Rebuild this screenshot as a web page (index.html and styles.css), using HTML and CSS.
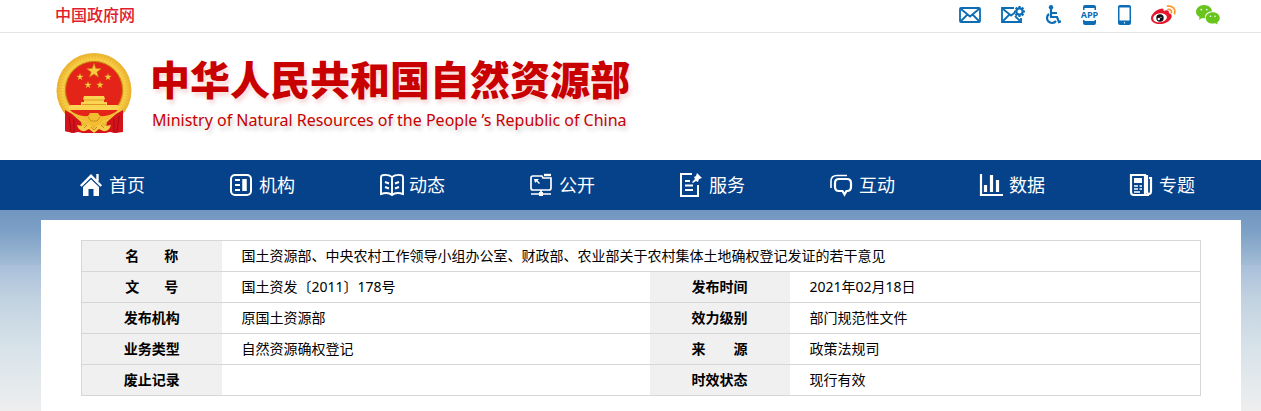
FILE: index.html
```html
<!DOCTYPE html>
<html lang="zh-CN">
<head>
<meta charset="utf-8">
<title>中华人民共和国自然资源部</title>
<link rel="stylesheet" href="styles.css">
</head>
<body>
<div class="topbar">
  <div class="wrap topbar-inner">
    <a class="gov" href="#">中国政府网</a>
    <div class="tools">
      <a href="#" aria-label="邮箱"><svg width="22" height="16" viewBox="0 0 22 16" fill="none" stroke="#0c6cb4" stroke-width="1.8"><rect x="1" y="1" width="20" height="14" rx="1"/><path d="M2 2l9 7.500L20 2M2 14l6-6M20 14l-6-6"/></svg></a>
      <a href="#" aria-label="邮箱设置"><svg width="24" height="18" viewBox="0 0 24 18" fill="none" stroke="#0c6cb4" stroke-width="1.8"><path d="M13 2H1v14h19v-4"/><path d="M2 3l8 6.500 4-3M2 15l6-6M19 15l-5-5"/><circle cx="18.500" cy="5.500" r="3.200" stroke-width="2.200"/><path d="M18.500 0v2M18.500 9v2M13 5.500h2M22 5.500h2M14.600 1.600l1.400 1.400M21 8l1.400 1.400M22.400 1.600L21 3M16 8l-1.400 1.400" stroke-width="2.200"/></svg></a>
      <a href="#" aria-label="无障碍"><svg width="16" height="20" viewBox="0 0 16 20" fill="none" stroke="#0c6cb4" stroke-width="2.200"><circle cx="6" cy="2.200" r="2.200" fill="#0c6cb4" stroke="none"/><path d="M6 4v8h6l2 5 2-.8M6 8h6"/><path d="M4 9a5 5 0 1 0 7 7"/></svg></a>
      <a href="#" aria-label="APP"><svg width="17" height="20" viewBox="0 0 17 20"><path d="M2 5V2q0-2 2-2h9q2 0 2 2v3h-1.500V3h-10v2zM2 15v3q0 2 2 2h9q2 0 2-2v-3h-1.500v1h-10v-1z" fill="#0c6cb4"/><text class="app" x="8.500" y="13" text-anchor="middle">APP</text></svg></a>
      <a href="#" aria-label="手机"><svg width="13" height="20" viewBox="0 0 13 20"><rect width="13" height="20" rx="2" fill="#0c6cb4"/><path d="M1.500 2.500h10v13h-10z" fill="#fff"/><circle cx="6.500" cy="17.700" r=".7" fill="#fff"/></svg></a>
      <a href="#" aria-label="微博"><svg width="25" height="20" viewBox="0 0 25 20"><path d="M9 4c2-1 4-1 3.600 2 3-1.300 6-1 5.200 2 3 1 3.700 3.200 2.200 5.500C18 17 13.500 19 9 19c-5 0-9-2-9-6C0 9.500 5 5 9 4z" fill="#e6162d"/><ellipse cx="9" cy="12.800" rx="7" ry="4.500" fill="#fff" transform="rotate(-8 9 12.800)"/><circle cx="9" cy="13" r="3.700" fill="#111"/><circle cx="7.800" cy="14" r="1.200" fill="#fff"/><circle cx="10" cy="12.300" r=".6" fill="#fff"/><path d="M16.500 1.200c5-1 8.500 3 7 7.500M17 4.500c2.500-.5 4 1 3.300 3.300" fill="none" stroke="#ff9933" stroke-width="1.700" stroke-linecap="round"/></svg></a>
      <a href="#" aria-label="微信"><svg width="24" height="20" viewBox="0 0 24 20" fill="#68c51d"><path d="M8 0c4.500 0 8 3 8 6.300-4.200 0-7.500 3-7 6.900-1 .1-2 0-3-.3L3 15l.5-3C1.200 10.800 0 9 0 6.800 0 3 3.600 0 8 0z"/><path d="M16.800 7.300c4 0 7 2.500 7 5.700 0 1.800-1 3.300-2.600 4.400l.5 2-2.400-1.200c-5 1.400-9.600-1.300-9.600-5.200 0-3.200 3-5.700 7.100-5.700z"/><g fill="#fff"><circle cx="5.300" cy="4.600" r=".9"/><circle cx="10.700" cy="4.600" r=".9"/><circle cx="14.500" cy="11.300" r=".8"/><circle cx="19" cy="11.300" r=".8"/></g></svg></a>
    </div>
  </div>
</div>

<header class="wrap masthead">
  <svg class="emblem" width="76" height="81" viewBox="0 0 76 81" aria-hidden="true">
    <defs><radialGradient id="gold" cx=".5" cy=".5" r=".5"><stop offset=".72" stop-color="#d99a1c"/><stop offset=".82" stop-color="#fbd24a"/><stop offset="1" stop-color="#eab02c"/></radialGradient>
    <path id="star" d="M0-1L.235-.324.951-.309.380.124.588.809 0 .4-.588.809-.380.124-.951-.309-.235-.324z"/></defs>
    <path d="M10 58h56l1 21-8 1-5-1-5 1H27l-5-1-5 1-8-2z" fill="#d5131b"/>
    <circle cx="38" cy="37.500" r="37.500" fill="url(#gold)"/>
    <circle cx="38" cy="37.500" r="33" fill="none" stroke="#d79b20" stroke-width="6" stroke-dasharray="1 2" opacity=".25"/>
    <circle cx="38" cy="37" r="28.500" fill="#e42319" stroke="#c6820f"/>
    <g fill="#f9cd3f" stroke="#c98912" stroke-width=".08"><use href="#star" transform="translate(38 18) scale(7.500)"/><use href="#star" transform="translate(24 24) scale(3.600)"/><use href="#star" transform="translate(52 24) scale(3.600)"/><use href="#star" transform="translate(32 32) scale(3.600)"/><use href="#star" transform="translate(44 32) scale(3.600)"/></g>
    <path d="M28 43h20l1 3-1 1v2h3v3h10l3 1-2 5H14l-2-5 3-1h10v-3h3v-2l-1-1z" fill="#fbd452"/>
    <path d="M28 47h20M26 51.500h24" stroke="#d78a16" stroke-width=".8"/>
    <path d="M14 57h48l-8 8H22z" fill="#e42319"/>
    <path d="M9 57l7 4 9 8 2 11-4-2-6 2-8-2zM67 57l-7 4-9 8-2 11 4-2 6 2 8-2z" fill="#d5131b"/>
    <path d="M13 63l2 16M18 66v13M63 63l-2 16M58 66v13" stroke="#a50a12"/>
    <path d="M15 58q8 6 17 5l2-3h8l2 3q9 1 17-5-5 8-14 10l-5 5-4-1-4 1-5-5q-9-2-14-10z" fill="#f4bd31"/>
    <path d="M21 72q7 2 11-1l6 4 6-4q4 3 11 1-2 7-8 6l-4-2-5 4-5-4-4 2q-6 1-8-6z" fill="#f7cb45"/>
    <path d="M32 64l3 4h6l3-4M31 72l-3 3M45 72l3 3M35 74l3 3 3-3" stroke="#c98a1c" fill="none"/>
  </svg>
  <div class="names">
    <h1>中华人民共和国自然资源部</h1>
    <p>Ministry of Natural Resources of the People ’s Republic of China</p>
  </div>
</header>

<nav class="nav">
  <div class="wrap nav-inner">
    <a href="#"><svg viewBox="0 0 22 22" fill="#fff"><path d="M11 5l8 7.500V22h-5.500v-7h-5v7H3v-9.500z"/><path d="M.8 12L11 1.800 21.200 12M17.500 0v7" fill="none" stroke="#fff" stroke-width="2.400"/><path d="M2.500 13L11 4.700l8.500 8.300" fill="none" stroke="#06428a" stroke-width=".9"/></svg>首页</a>
    <a href="#"><svg viewBox="0 0 22 22" fill="none" stroke="#fff" stroke-width="2"><rect x="1" y="1" width="20" height="20" rx="4"/><path d="M5 6h5M5 11h5M5 16h5"/><path d="M14.500 5v12" stroke-width="4.500"/></svg>机构</a>
    <a href="#"><svg class="wide" viewBox="0 0 24 22" fill="none" stroke="#fff" stroke-width="1.900"><path d="M12 3Q8 0 2.500 1.200 1 1.500 1 3v17Q8 17.500 12 21q4-3.500 11-1V3q0-1.500-1.500-1.800Q16 0 12 3zv18"/><path d="M5 8l4 1.500M5 13l4 1.500M15 9.500L19 8M15 14.500l4-1.500"/></svg>动态</a>
    <a href="#"><svg viewBox="0 0 22 22" fill="none" stroke="#fff" stroke-width="1.700"><path d="M12 2H3Q1 2 1 4v10q0 2 2 2h16q2 0 2-2V4h-8zM11 16v3M1 20h20"/><path d="M14 1h7" stroke-width="2.400"/><path d="M9 18h4v4H9zM4 5h5L7.500 6.500 10 9l-1 1-2.500-2.500L5 9z" fill="#fff" stroke="none"/></svg>公开</a>
    <a href="#"><svg viewBox="0 0 22 22" fill="none" stroke="#fff" stroke-width="2"><path d="M12 0H1v22h17V11M5 7h5M5 11.500h8M5 16h8"/><path d="M17-1l5 5-3 1-1 3-2-1-3 2-1-1 3-3-1-2 2-1z" fill="#fff" stroke="none"/></svg>服务</a>
    <a href="#"><svg viewBox="0 0 22 22" fill="none" stroke="#fff" stroke-width="2.200"><path d="M9 5h8q4 0 4 4v4q0 4-4 4h-.5l-2 3.500-2-3.500H9q-4 0-4-4V9q0-4 4-4z"/><path d="M1 14V7q0-5.500 6-5.500h10" stroke-width="1.600"/></svg>互动</a>
    <a href="#"><svg viewBox="0 0 22 22" fill="none" stroke="#fff"><path d="M1 0v21h22" stroke-width="2.200"/><path d="M5.500 11v7M11.500 1v17M17.500 6v12" stroke-width="3.200"/></svg>数据</a>
    <a href="#"><svg viewBox="0 0 22 22" fill="none" stroke="#fff" stroke-width="2.200"><path d="M1 1h14v20H4q-3 0-3-3zM15 2h2v15q0 3 2 3 2 0 2-3V4h-2M15 21h4"/><path d="M4 4h8v5H4z" fill="#fff" stroke="none"/><path d="M4 12h4M4 15h4M9.500 12H12M9.500 15H12M4 18h6" stroke-width="1.400"/></svg>专题</a>
  </div>
</nav>

<main class="stage">
  <div class="panel">
    <table class="meta">
      <colgroup><col class="label"><col><col class="label"><col class="last"></colgroup>
      <tr><th scope="row">名&emsp;&nbsp;&nbsp;&nbsp;称</th><td colspan="3">国土资源部、中央农村工作领导小组办公室、财政部、农业部关于农村集体土地确权登记发证的若干意见</td></tr>
      <tr><th scope="row">文&emsp;&nbsp;&nbsp;&nbsp;号</th><td>国土资发〔2011〕178号</td><th scope="row">发布时间</th><td>2021年02月18日</td></tr>
      <tr><th scope="row">发布机构</th><td>原国土资源部</td><th scope="row">效力级别</th><td>部门规范性文件</td></tr>
      <tr><th scope="row">业务类型</th><td>自然资源确权登记</td><th scope="row">来　　源</th><td>政策法规司</td></tr>
      <tr><th scope="row">废止记录</th><td></td><th scope="row">时效状态</th><td>现行有效</td></tr>
    </table>
  </div>
</main>
</body>
</html>
```
FILE: styles.css
```css
* { box-sizing: border-box; }
html, body { min-height: 100%; }
body {
  margin: 0;
  background: #fff;
  color: #000;
  font: 14px/20px "Noto Sans", "Noto Sans CJK SC", sans-serif;
}
a { color: inherit; text-decoration: none; }
svg { display: block; flex: none; }

.wrap { padding: 0 20px 0 41px; }

.topbar { border-bottom: 1px solid #e4e4e4; }
.topbar-inner { display: flex; justify-content: space-between; align-items: flex-start; height: 32px; }
.gov { padding-left: 14px; color: #e0202c; font-size: 16px; line-height: 30px; font-weight: 500; }
.tools { display: flex; align-items: center; gap: 20px; padding-right: 21px; height: 30px; }
.app { fill: #0c6cb4; font: bold 9px "Open Sans", sans-serif; }

.masthead { display: flex; align-items: flex-start; gap: 18px; padding-top: 20px; padding-bottom: 26px; }
.emblem { margin-left: 15px; }
.names { color: #c80000; white-space: nowrap; }
.names h1 {
  margin: 0;
  font-size: 40px;
  line-height: 54px;
  font-weight: 900;
  text-shadow: 2px 4px 4px rgba(200, 0, 0, .15);
}
.names p {
  margin: 0 0 0 2px;
  font-size: 16px;
  line-height: 26px;
  text-shadow: 2px 4px 4px rgba(0, 0, 0, .2);
}

.nav { background: #06428a; color: #fff; }
.nav-inner { display: grid; grid-template-columns: repeat(8, 1fr); }
.nav a {
  display: flex;
  align-items: center;
  gap: 7px;
  height: 50px;
  padding-left: 39px;
  font-size: 18px;
  white-space: nowrap;
}
.nav svg { width: 22px; height: 22px; overflow: visible; }
.nav .wide { width: 24px; margin-right: -2px; }

.stage {
  padding: 10px 20px 0 41px;
  background: linear-gradient(#7196bf, #7b9fc6 20px, #a2bcd4 55px, #a9bfdb 55px, #c2d2e0 90px, #d4e0e8 130px, #e1e8ec 165px, #eeeeef 201px);
}
.panel { background: #fff; padding: 20px 40px 15px; }

.meta { width: 100%; border-collapse: collapse; table-layout: fixed; border: 1px solid #d6d6d6; }
.meta .label { width: 140px; }
.meta .last { width: 411px; }
.meta th, .meta td { height: 31px; padding: 0; border-bottom: 1px solid #d6d6d6; line-height: 20px; }
.meta th { background: #f0f0f0; font-weight: 700; text-align: center; }
.meta td { padding-left: 20px; text-align: left; }
```
